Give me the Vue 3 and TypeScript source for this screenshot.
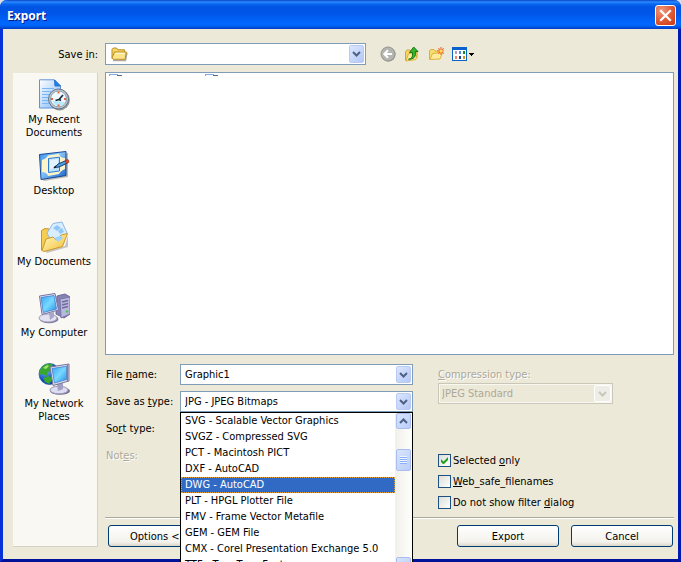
<script setup lang="ts">
import { ref } from 'vue'

interface Place {
  id: string
  lines: string[]
}

interface Check {
  id: string
  before: string
  key: string
  after: string
  checked: boolean
}

const places: Place[] = [
  { id: 'recent', lines: ['My Recent', 'Documents'] },
  { id: 'desktop', lines: ['Desktop'] },
  { id: 'documents', lines: ['My Documents'] },
  { id: 'computer', lines: ['My Computer'] },
  { id: 'network', lines: ['My Network', 'Places'] },
]

const formats: string[] = [
  'SVG - Scalable Vector Graphics',
  'SVGZ - Compressed SVG',
  'PCT - Macintosh PICT',
  'DXF - AutoCAD',
  'DWG - AutoCAD',
  'PLT - HPGL Plotter File',
  'FMV - Frame Vector Metafile',
  'GEM - GEM File',
  'CMX - Corel Presentation Exchange 5.0',
  'TTF - True Type Font',
]

const fileName = ref('Graphic1')
const highlighted = ref('DWG - AutoCAD')

const checks = ref<Check[]>([
  { id: 'selected', before: 'Selected ', key: 'o', after: 'nly', checked: true },
  { id: 'websafe', before: '', key: 'W', after: 'eb_safe_filenames', checked: false },
  { id: 'nofilter', before: 'Do not show filter ', key: 'd', after: 'ialog', checked: false },
])
</script>

<template>
  <div class="screen">
    <main class="window">
      <header class="titlebar">
        <h1>Export</h1>
        <button class="close" type="button" aria-label="Close">
          <svg width="13" height="13" viewBox="0 0 13 13"><path d="M2 2 11 11M11 2 2 11" stroke="#fff" stroke-width="2.2" stroke-linecap="square" /></svg>
        </button>
      </header>

      <form class="body" @submit.prevent>
        <label class="savein-label" for="savein">Save <u>i</u>n:</label>
        <div class="toprow">
          <div class="combo savein">
            <svg class="folder" width="17" height="15" viewBox="0 0 17 15">
              <path d="M2 13.5h12.5l1.5-8" fill="none" stroke="#777060" stroke-width="1.4" opacity=".6" />
              <path d="M1 11.5V2.5L2.3 1H5.6L7 2.8h6.5V5" fill="#f5d569" stroke="#b98b1c" />
              <path d="M3.5 5H15.3L14 12.3H2.2L1 11Z" fill="#fbe48c" stroke="#b98b1c" />
              <path d="M4.5 6.3h9.3" stroke="#fffbd5" />
            </svg>
            <select id="savein"><option></option></select>
            <span class="arrow"><svg width="9" height="6" viewBox="0 0 9 6"><path d="M1 1 4.500 4.500 8 1" /></svg></span>
          </div>
          <div class="tools">
            <button type="button" aria-label="Back">
              <svg width="16" height="16" viewBox="0 0 16 16">
                <circle cx="8.500" cy="8.500" r="7" fill="#8b8b86" />
                <circle cx="8" cy="8" r="7" fill="#b5b5b0" stroke="#969692" />
                <path d="M12 8H4.500M8 4.300 4.300 8 8 11.700" fill="none" stroke="#fff" stroke-width="2" />
              </svg>
            </button>
            <button type="button" aria-label="Up one level">
              <svg width="16" height="16" viewBox="0 0 16 16">
                <path d="M1.500 14.500V5.500L3 4H6L7.500 5.500H13V12" fill="#f5d565" stroke="#d4a72c" />
                <path d="M2 15 4.500 7.500 13 6.500 12 13.500Z" fill="#fdeb98" stroke="#d9b13a" />
                <path d="M4.500 13.200C8 13 8.700 10.500 8.500 6.500H5.500L9.700 1 14 5.500H11.500C12 10.500 10 13.500 4.500 13.200Z" fill="#35b52b" stroke="#17781a" />
              </svg>
            </button>
            <button type="button" aria-label="Create new folder">
              <svg width="16" height="16" viewBox="0 0 16 16">
                <path d="M1.500 13.500V4.500L3 3.500H6L7 5H11.500V8" fill="#f9dc70" stroke="#d9b13a" />
                <path d="M2 13.500 4.500 7.500 14.500 6.500 12 13Z" fill="#fdeb98" stroke="#dcb43f" />
                <path d="M13 1v8M9 5h8M10.300 2.300l5.400 5.400M15.700 2.300l-5.400 5.400" stroke="#f26a3d" stroke-width="1.200" />
                <circle cx="13" cy="5" r="1.500" fill="#ffe64d" />
              </svg>
            </button>
            <button class="view" type="button" aria-label="View menu">
              <svg width="23" height="16" viewBox="0 0 23 16">
                <rect x=".5" y="1.500" width="14" height="13" fill="#fff" stroke="#0a63c9" />
                <rect x="0" y="1" width="15" height="3" fill="#0b62cf" />
                <path fill="#b49ac2" d="M3 5h2v3H3z" /><path fill="#4d8ede" d="M7 5h2v3H7z" /><path fill="#168b1d" d="M11 5h2v3h-2z" />
                <path fill="#ef8270" d="M3 10h2v3H3z" /><path fill="#1c3f9c" d="M7 10h2v3H7z" /><path fill="#c7971a" d="M11 10h2v3h-2z" />
                <path fill="#000" d="M17 7h5v1h-1v1h-1v1h-1V9h-1V8h-1z" />
              </svg>
            </button>
          </div>
        </div>

        <nav class="places" aria-label="Places">
          <button v-for="place in places" :key="place.id" class="place" type="button">
            <svg v-if="place.id === 'recent'" width="32" height="32" viewBox="0 0 32 32">
              <defs>
                <linearGradient id="paper" x2="1" y2="1"><stop stop-color="#fff" /><stop offset="1" stop-color="#7db8fa" /></linearGradient>
              </defs>
              <path d="M1.500 29V.8H16.500L22.500 7V29Z" fill="url(#paper)" stroke="#6591d8" />
              <path d="M16.500 1 22.500 7H17Z" fill="#1686e8" stroke="#2b70ca" />
              <path d="M4 9.500H16M4 12.500H13M4 15.500H11M4 18.500H10M4 21.500H10M4 24.500H12" stroke="#79b6f8" />
              <circle cx="21.500" cy="21" r="10.400" fill="#5e6670" opacity=".65" />
              <circle cx="20.500" cy="20" r="10" fill="#bdcad5" stroke="#667480" />
              <circle cx="20.500" cy="20" r="8" fill="#eefaff" stroke="#8d9da9" />
              <path d="M14.500 22a6.300 6.300 0 0 0 12 1Z" fill="#b7e8fb" />
              <path d="M20.500 12.500v2M20.500 25.500v2M13 20h2M26 20h2" stroke="#e5623c" stroke-width="1.800" />
              <path d="M17.500 21.500 21 20.500 25 16M21 20.500 23 21.500" fill="none" stroke="#172b3c" stroke-width="1.700" />
            </svg>
            <svg v-else-if="place.id === 'desktop'" width="32" height="32" viewBox="0 0 32 32">
              <defs>
                <linearGradient id="blotter" x2="1" y2="1"><stop stop-color="#2f8bed" /><stop offset=".4" stop-color="#8fcaff" /><stop offset="1" stop-color="#1560c7" /></linearGradient>
              </defs>
              <path d="M4 29 3 6 30 3V27L6 31Z" fill="#444" opacity=".35" />
              <path d="M1.500 4.500 28 1.500V25.500L3 29.500Z" fill="url(#blotter)" stroke="#174b94" />
              <path d="M4 10C8 9 9 7 10 5.500L21 4C22 7 24 8 27 8V19C24 20 22 22 21 24L10 26C9 23 7 22 4 22Z" fill="#fff4c8" />
              <path d="M10.500 8.500 21.500 7.200V21L10.500 22.500Z" fill="#bfe2ff" stroke="#2d7bd4" />
              <path d="M12 10 20 9v6l-8 5Z" fill="#e3f4ff" />
              <path d="M16.500 17.500 20 14 28 10.500 29.500 13 21 17Z" fill="#4aa0e5" stroke="#174175" />
              <path d="M27 10.800 30 9.500 31 12 28.500 13.500Z" fill="#ee4c2c" stroke="#9d2417" stroke-width=".7" />
              <path d="M16 18l2-2" stroke="#111" stroke-width="1.500" />
            </svg>
            <svg v-else-if="place.id === 'documents'" width="32" height="32" viewBox="0 0 32 32">
              <defs>
                <linearGradient id="fold" x2="1" y2="1"><stop stop-color="#fffbc3" /><stop offset="1" stop-color="#f4bd36" /></linearGradient>
              </defs>
              <path d="M7 30 27 25 30 14V26L9 32Z" fill="#666" opacity=".35" />
              <path d="M3.500 29V9.500L7 7.500 11 8 13 10 26 8 28 13 22 26Z" fill="#f8cc4e" stroke="#c8952a" />
              <path d="M9 12 15 2.500 24 1 29 12 20 23 13 20Z" fill="#d8eeff" stroke="#8db8e8" />
              <path d="M15 7 19 4 23 7 19 10ZM20 10 24 7 26 11 22 13Z" fill="#7ebdf6" opacity=".8" />
              <path d="M4 29.500 8 18 15 16 18 19 23 14 29.500 12.500 24.500 25.500 6 30.500Z" fill="url(#fold)" stroke="#cc982b" />
              <path d="M16 17 23 14.500 25 17 20 21Z" fill="#a2d2fa" />
            </svg>
            <svg v-else-if="place.id === 'computer'" width="32" height="32" viewBox="0 0 32 32">
              <defs>
                <linearGradient id="glass" x2="1" y2="1"><stop stop-color="#3aa2f4" /><stop offset=".5" stop-color="#78d9ff" /><stop offset="1" stop-color="#248de4" /></linearGradient>
              </defs>
              <path d="M19 4 27 2 32 5V22L26 26 18 22Z" fill="#8583b3" stroke="#6b6899" />
              <path d="M22 7 32 5V22L23 26Z" fill="#b9b7db" stroke="#7975a8" />
              <path d="M24 10 30 8.500M24 13 30 11.500M24 16 30 14.500" stroke="#706c9f" stroke-width="1.300" />
              <circle cx="29" cy="19.500" r="1.300" fill="#49c952" />
              <ellipse cx="11" cy="27" rx="9.500" ry="4.300" fill="#7e7c9f" />
              <ellipse cx="10" cy="26" rx="9" ry="4" fill="#e3e2f1" stroke="#a19eba" />
              <path d="M11 21 16 20V25L12 28Z" fill="#a9a6ca" />
              <path d="M1.500 4 17 1.500 20.500 18 4 22.500Z" fill="#e2e1f3" stroke="#7874a5" />
              <path d="M3 5.500 16 3.500 18.500 17 5.300 20.500Z" fill="url(#glass)" stroke="#3175c8" stroke-width=".7" />
            </svg>
            <svg v-else width="32" height="32" viewBox="0 0 32 32">
              <defs>
                <radialGradient id="globe" cx=".3" cy=".3"><stop stop-color="#7fc7ff" /><stop offset="1" stop-color="#0f49bd" /></radialGradient>
              </defs>
              <circle cx="11.500" cy="11" r="10.500" fill="url(#globe)" stroke="#2054a8" stroke-width=".7" />
              <path d="M4 4C7 0 13 0 15 2L12 5 14 8 10 9 9 13 4 11 1.500 12C1 9 2 6 4 4ZM5 15 11 13 15 16 11 21 7 19Z" fill="#37a72f" />
              <path d="M5 5 9 2 11 3 8 6Z" fill="#a2e66b" />
              <ellipse cx="22" cy="28" rx="10" ry="3.800" fill="#74728f" />
              <ellipse cx="21" cy="27" rx="9" ry="3.800" fill="#dddcf0" stroke="#9997b3" />
              <path d="M19 21 25 20 25 26 20 28Z" fill="#a29fc5" />
              <path d="M12 4 31 1V18L15 22.500Z" fill="#dedef1" stroke="#777596" />
              <path d="M14 5.500 28.500 3.300V16.500L16.500 20Z" fill="url(#glass)" stroke="#3979c2" stroke-width=".7" />
              <path d="M29.500 2v16" stroke="#817fa1" stroke-width="1.500" />
            </svg>
            <span v-for="line in place.lines" :key="line">{{ line }}</span>
          </button>
        </nav>

        <section class="content">
          <div class="files" role="list" aria-label="Files">
            <svg v-for="n in 2" :key="n" width="96" height="2" viewBox="0 0 96 2">
              <path d="M0 .5H9M0 1.500H1" fill="none" stroke="#86a9df" /><path d="M8 1.500H13" stroke="#566b93" />
            </svg>
          </div>

          <div class="form">
            <div class="fields">
              <label for="filename">File <u>n</u>ame:</label>
              <div class="combo">
                <input id="filename" v-model="fileName" type="text" />
                <span class="arrow"><svg width="9" height="6" viewBox="0 0 9 6"><path d="M1 1 4.500 4.500 8 1" /></svg></span>
              </div>

              <label for="filetype">Save as <u>t</u>ype:</label>
              <div class="combo">
                <select id="filetype"><option>JPG - JPEG Bitmaps</option></select>
                <span class="arrow"><svg width="9" height="6" viewBox="0 0 9 6"><path d="M1 1 4.500 4.500 8 1" /></svg></span>
                <div class="dropdown">
                  <ul role="listbox" aria-labelledby="filetype">
                    <li
                      v-for="format in formats"
                      :key="format"
                      role="option"
                      :aria-selected="format === highlighted"
                      :class="{ active: format === highlighted }"
                      @mouseenter="highlighted = format"
                    >{{ format }}</li>
                  </ul>
                  <div class="scrollbar">
                    <span class="step"><svg width="9" height="6" viewBox="0 0 9 6"><path d="M1 5 4.500 1.500 8 5" /></svg></span>
                    <span class="thumb"></span>
                    <span class="step"><svg width="9" height="6" viewBox="0 0 9 6"><path d="M1 1 4.500 4.500 8 1" /></svg></span>
                  </div>
                </div>
              </div>

              <label for="sort">So<u>r</u>t type:</label>
              <div class="combo"><select id="sort"><option></option></select></div>

              <label class="dim" for="notes">Not<u>e</u>s:</label>
              <div class="combo"><input id="notes" type="text" disabled /></div>
            </div>

            <div class="options">
              <label class="dim" for="compression"><u>C</u>ompression type:</label>
              <div class="combo off">
                <select id="compression" disabled><option>JPEG Standard</option></select>
                <span class="arrow"><svg width="9" height="6" viewBox="0 0 9 6"><path d="M1 1 4.500 4.500 8 1" /></svg></span>
              </div>
              <div class="checks">
                <label v-for="c in checks" :key="c.id" :for="c.id">
                  <span class="box">
                    <input :id="c.id" v-model="c.checked" type="checkbox" />
                    <svg v-if="c.checked" width="13" height="13" viewBox="0 0 13 13"><path d="M3 5v3l2 2h1l4-4V3L5.500 7.500Z" fill="#21a121" /></svg>
                  </span>
                  <span>{{ c.before }}<u>{{ c.key }}</u>{{ c.after }}</span>
                </label>
              </div>
            </div>
          </div>

          <hr />

          <footer>
            <button class="push" type="button">Options &lt;&lt;</button>
            <div class="actions">
              <button class="push" type="submit">Export</button>
              <button class="push" type="button">Cancel</button>
            </div>
          </footer>
        </section>
      </form>
    </main>
  </div>
</template>

<style>
html,
body {
  margin: 0;
  overflow: hidden;
  background: #d9dfe8;
}
</style>

<style scoped>
.screen,
.screen * {
  box-sizing: border-box;
}

.screen {
  display: grid;
  height: 100vh;
  overflow: hidden;
  font-family: 'DejaVu Sans Condensed', 'DejaVu Sans', sans-serif;
  font-size: 11px;
  line-height: 13px;
  color: #000;
}

button,
input,
select {
  margin: 0;
  padding: 0;
  font: inherit;
  color: inherit;
}

svg {
  display: block;
  flex: none;
}

.window {
  display: flex;
  flex-direction: column;
  min-width: 0;
  border: 3px solid #0831d9;
  border-top: 0;
  border-right-color: #0019b0;
  border-bottom-color: #00129a;
  border-radius: 7px 7px 0 0;
  background: #ece9d8;
}

.titlebar {
  display: flex;
  flex: none;
  align-items: center;
  justify-content: space-between;
  height: 29px;
  margin: 0 -3px;
  padding: 2px 5px 0 7px;
  border-radius: 7px 7px 0 0;
  background: linear-gradient(#0a45c8 0, #2a8bff 2px, #0a66f0 4px, #0054e3 7px, #0056e9 14px, #0062f8 20px, #0068ff 25px, #0054e0 27px, #003dc4 29px);
}

h1 {
  margin: 0;
  font-family: 'Noto Sans', sans-serif;
  font-size: 12px;
  font-weight: 700;
  line-height: 16px;
  color: #fff;
  text-shadow: 1px 1px #0a1883;
}

.close {
  display: grid;
  place-items: center;
  width: 21px;
  height: 21px;
  border: 1px solid #fff;
  border-radius: 3px;
  background: radial-gradient(circle at 30% 25%, #ee9a7e 0, #e2603c 45%, #c8370f 100%);
}

.body {
  display: grid;
  flex: 1;
  grid-template-columns: 85px minmax(0, 1fr);
  grid-template-rows: 22px minmax(0, 1fr);
  gap: 7px;
  padding: 14px 4px 12px 10px;
}

.savein-label {
  align-self: center;
  justify-self: end;
}

.toprow {
  display: grid;
  grid-template-columns: 261fr 308fr;
}

.combo {
  position: relative;
  display: flex;
  align-items: center;
  height: 21px;
  border: 1px solid #7f9db9;
  background: #fff;
}

.combo.savein {
  height: 22px;
}

.combo select,
.combo input {
  flex: 1;
  width: 100%;
  min-width: 0;
  height: 100%;
  padding-left: 4px;
  border: 0;
  outline: 0;
  appearance: none;
  background: transparent;
}

.folder {
  margin-left: 5px;
}

.arrow {
  display: grid;
  flex: none;
  place-items: center;
  align-self: stretch;
  width: 15px;
  margin: 1px;
  border: 1px solid #b9cbf5;
  border-radius: 2px;
  background: linear-gradient(135deg, #dbe6fe, #b4c8f6);
  pointer-events: none;
}

.arrow path,
.step path {
  fill: none;
  stroke: #4d6185;
  stroke-width: 2;
}

.tools {
  display: flex;
  gap: 8px;
  align-items: center;
  padding-left: 14px;
}

.tools button {
  border: 0;
  background: none;
}

.places {
  display: flex;
  flex-direction: column;
  margin-top: 1px;
  padding-top: 6px;
  border: solid #d5d2c3;
  border-width: 0 1px 1px 0;
  background: #f9f8f3;
}

.place {
  display: flex;
  flex: none;
  flex-direction: column;
  align-items: center;
  height: 71px;
  padding-right: 2px;
  border: 0;
  background: none;
}

.place svg {
  margin-bottom: 2px;
}

.content {
  display: flex;
  flex-direction: column;
}

.files {
  display: flex;
  flex: 1;
  align-items: flex-start;
  padding: 1px 3px;
  border: 1px solid #7f9db9;
  background: #fff;
}

.form {
  display: grid;
  flex: none;
  grid-template-columns: 308fr 25px 236fr;
  padding-top: 9px;
}

.fields {
  display: grid;
  grid-template-columns: 75px minmax(0, 1fr);
  grid-auto-rows: 21px;
  row-gap: 6px;
  align-content: start;
  align-items: center;
}

.fields label {
  padding-left: 1px;
}

.dropdown {
  position: absolute;
  top: 20px;
  right: -1px;
  left: -1px;
  z-index: 2;
  display: flex;
  border: 1px solid #000;
  background: #fff;
}

.dropdown ul {
  flex: 1;
  min-width: 0;
  margin: 0;
  padding: 0;
  list-style: none;
}

.dropdown li {
  height: 16px;
  padding-left: 4px;
  line-height: 16px;
  white-space: nowrap;
}

.dropdown li.active {
  outline: 1px dotted #e3a03c;
  outline-offset: -1px;
  background: #316ac5;
  color: #fff;
}

.scrollbar {
  display: flex;
  flex-direction: column;
  width: 17px;
  background: linear-gradient(90deg, #f1f0ea, #fefefb);
}

.step,
.thumb {
  display: grid;
  flex: none;
  place-items: center;
  width: 15px;
  height: 16px;
  margin-left: 1px;
  border: 1px solid #a9bdf0;
  border-radius: 2px;
  background: linear-gradient(135deg, #d8e4fe, #bacdf9);
}

.thumb {
  height: 22px;
  margin-top: 20px;
  margin-bottom: auto;
}

.thumb::before {
  width: 7px;
  height: 8px;
  background: repeating-linear-gradient(#eef4fe 0, #eef4fe 1px, #8cb0f8 1px, #8cb0f8 2px);
  content: '';
}

.dim {
  color: #aca899;
  text-shadow: 1px 1px #fff;
}

.options {
  display: flex;
  grid-column: 3;
  flex-direction: column;
  padding-top: 4px;
}

.options .combo {
  width: 74%;
  margin-top: 2px;
}

.combo.off {
  border-color: #c9c7ba;
  background: #ece9d8;
  box-shadow: inset 0 0 0 1px #f8f7f0;
}

.off select {
  padding-left: 3px;
  color: #aca899;
  opacity: 1;
}

.off .arrow {
  width: 17px;
  border-color: #fff;
  background: #efeee6;
}

.off .arrow path {
  stroke: #c9c7ba;
}

.checks {
  padding-top: 46px;
}

.checks label {
  display: flex;
  gap: 2px;
  align-items: center;
  height: 21px;
}

.box {
  position: relative;
  display: block;
  width: 13px;
  height: 13px;
}

.box input {
  display: block;
  width: 13px;
  height: 13px;
  border: 1px solid #1c5180;
  appearance: none;
  background: linear-gradient(135deg, #dcdcd7, #fff);
}

.box svg {
  position: absolute;
  inset: 0;
}

hr {
  width: 100%;
  height: 2px;
  margin: 4px 0 6px;
  border: 0;
  border-top: 1px solid #aca899;
  border-bottom: 1px solid #fff;
}

footer,
.actions {
  display: flex;
  gap: 12px;
  justify-content: space-between;
}

footer {
  padding: 0 1px 0 3px;
}

.push {
  width: 102px;
  height: 22px;
  border: 1px solid #003c74;
  border-radius: 3px;
  background: linear-gradient(#fff, #f3f2ec 80%, #dbd6ca);
}
</style>
